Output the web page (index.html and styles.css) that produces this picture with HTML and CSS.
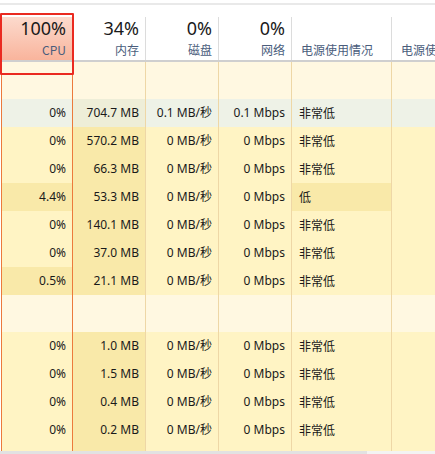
FILE: index.html
```html
<!DOCTYPE html>
<html lang="zh-CN">
<head>
<meta charset="utf-8">
<link rel="stylesheet" href="styles.css">
</head>
<body>
<div class="app">
  <div class="topline"></div>
  <div class="grid">
    <div class="head">
      <div class="hc cpu num"><span class="val">100%</span><span class="lbl">CPU</span></div>
      <div class="hc num"><span class="val">34%</span><span class="lbl">内存</span></div>
      <div class="hc num"><span class="val">0%</span><span class="lbl">磁盘</span></div>
      <div class="hc num"><span class="val">0%</span><span class="lbl">网络</span></div>
      <div class="hc txt"><span class="val"></span><span class="lbl">电源使用情况</span></div>
      <div class="hc txt"><span class="val"></span><span class="lbl">电源使用情况趋势</span></div>
    </div>
    <div class="row group"><div class="c c1"></div><div class="c"></div><div class="c"></div><div class="c"></div><div class="c"></div><div class="c"></div></div>
    <div class="row sel"><div class="c c1">0%</div><div class="c mem">704.7 MB</div><div class="c">0.1 MB/秒</div><div class="c">0.1 Mbps</div><div class="c t">非常低</div><div class="c"></div></div>
    <div class="row"><div class="c c1">0%</div><div class="c mem">570.2 MB</div><div class="c">0 MB/秒</div><div class="c">0 Mbps</div><div class="c t">非常低</div><div class="c"></div></div>
    <div class="row"><div class="c c1">0%</div><div class="c mem">66.3 MB</div><div class="c">0 MB/秒</div><div class="c">0 Mbps</div><div class="c t">非常低</div><div class="c"></div></div>
    <div class="row"><div class="c c1 hot">4.4%</div><div class="c mem">53.3 MB</div><div class="c">0 MB/秒</div><div class="c">0 Mbps</div><div class="c t hot">低</div><div class="c"></div></div>
    <div class="row"><div class="c c1">0%</div><div class="c mem">140.1 MB</div><div class="c">0 MB/秒</div><div class="c">0 Mbps</div><div class="c t">非常低</div><div class="c"></div></div>
    <div class="row"><div class="c c1">0%</div><div class="c mem">37.0 MB</div><div class="c">0 MB/秒</div><div class="c">0 Mbps</div><div class="c t">非常低</div><div class="c"></div></div>
    <div class="row"><div class="c c1 hot">0.5%</div><div class="c mem">21.1 MB</div><div class="c">0 MB/秒</div><div class="c">0 Mbps</div><div class="c t">非常低</div><div class="c"></div></div>
    <div class="row group"><div class="c c1"></div><div class="c"></div><div class="c"></div><div class="c"></div><div class="c"></div><div class="c"></div></div>
    <div class="row"><div class="c c1">0%</div><div class="c mem">1.0 MB</div><div class="c">0 MB/秒</div><div class="c">0 Mbps</div><div class="c t">非常低</div><div class="c"></div></div>
    <div class="row"><div class="c c1">0%</div><div class="c mem">1.5 MB</div><div class="c">0 MB/秒</div><div class="c">0 Mbps</div><div class="c t">非常低</div><div class="c"></div></div>
    <div class="row"><div class="c c1">0%</div><div class="c mem">0.4 MB</div><div class="c">0 MB/秒</div><div class="c">0 Mbps</div><div class="c t">非常低</div><div class="c"></div></div>
    <div class="row"><div class="c c1">0%</div><div class="c mem">0.2 MB</div><div class="c">0 MB/秒</div><div class="c">0 Mbps</div><div class="c t">非常低</div><div class="c"></div></div>
    <div class="row"><div class="c c1"></div><div class="c mem"></div><div class="c"></div><div class="c"></div><div class="c"></div><div class="c"></div></div>
  </div>
  <div class="scroll"><div class="thumb"></div></div>
  <div class="focus"></div>
</div>
</body>
</html>
```
FILE: styles.css
```css
html, body {
  margin: 0;
  padding: 0;
  background: #ffffff;
}
.app {
  position: relative;
  width: 435px;
  height: 454px;
  overflow: hidden;
  font-family: "Noto Sans", "Noto Sans CJK SC", sans-serif;
  font-size: 12px;
  color: #1a1a1a;
}
.topline {
  height: 2px;
  margin-top: 3px;
  background: #e9e9e9;
}
.grid {
  padding-top: 12px;
  height: 434px;
  overflow: hidden;
}
.head, .row {
  display: grid;
  grid-template-columns: 73px 73px 73px 73px 100px 100px;
}
.head {
  height: 43px;
  border-bottom: 2px solid #cfcfcf;
}
.hc {
  display: flex;
  flex-direction: column;
  border-right: 1px solid #dcdcdc;
  padding: 0 6px 0 8px;
  white-space: nowrap;
  overflow: hidden;
}
.hc.num { align-items: flex-end; }
.hc.txt { align-items: flex-start; padding-left: 9px; }
.hc.cpu {
  background: linear-gradient(#fcdacd, #f9b49c);
  border-right-color: #f3b497;
}
.val {
  font-family: "Noto Sans", sans-serif;
  font-weight: 400;
  font-size: 18px;
  line-height: 20px;
  height: 20px;
  padding-top: 1px;
  color: #1a1a1a;
}
.lbl {
  font-family: "Noto Sans CJK SC", "Noto Sans", sans-serif;
  font-size: 12px;
  line-height: 16px;
  padding-top: 4px;
  color: #4a5d7c;
}
.row {
  height: 28px;
}
.row.group {
  height: 37px;
}
.c {
  background: #fff4c4;
  border-right: 1px solid #eed7a6;
  text-align: right;
  padding: 0 6px;
  line-height: 28px;
  white-space: nowrap;
}
.c.t {
  text-align: left;
  padding-left: 7px;
  font-family: "Noto Sans CJK SC", sans-serif;
}
.c1 {
  border-left: 1px solid #ec7a3c;
  border-right: 1px solid #ec7a3c;
  margin-left: 1px;
}
.c.mem { background: #f9e9a9; }
.c.hot { background: #f9e9a9; }
.row.group .c { background: #fff8e1; }
.row.sel .c { background: #eef2e7; }
.row.sel .c.mem { background: #eeeed8; }
.scroll {
  position: absolute;
  left: 0;
  right: 0;
  bottom: 0;
  height: 3px;
  background: #f3f3f3;
}
.thumb {
  width: 367px;
  height: 3px;
  background: #e2e2e2;
}
.focus {
  position: absolute;
  left: 0;
  top: 13px;
  width: 70px;
  height: 58px;
  border: 2px solid #ea2a20;
  border-radius: 1px;
}
```
